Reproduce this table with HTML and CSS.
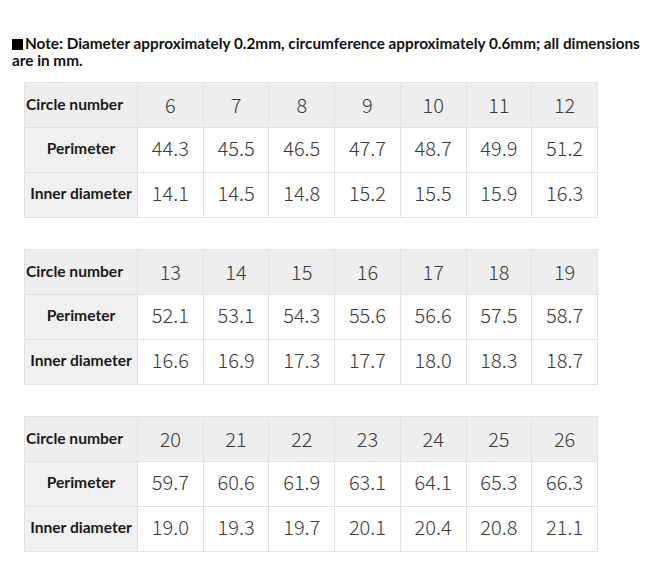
FILE: index.html
```html
<!DOCTYPE html>
<html lang="en">
<head>
<meta charset="utf-8">
<title>Ring size chart</title>
<link rel="stylesheet" href="styles.css">
</head>
<body>
<div class="page">
  <p class="note"><span class="sq"></span>Note: Diameter approximately 0.2mm, circumference approximately 0.6mm; all dimensions are in mm.</p>
  <div class="tables">
    <table class="chart">
      <colgroup><col class="c-label"><col><col><col><col><col><col><col></colgroup>
      <tr class="head"><th class="lbl left">Circle number</th><td>6</td><td>7</td><td>8</td><td>9</td><td>10</td><td>11</td><td>12</td></tr>
      <tr><th class="lbl">Perimeter</th><td>44.3</td><td>45.5</td><td>46.5</td><td>47.7</td><td>48.7</td><td>49.9</td><td>51.2</td></tr>
      <tr><th class="lbl">Inner diameter</th><td>14.1</td><td>14.5</td><td>14.8</td><td>15.2</td><td>15.5</td><td>15.9</td><td>16.3</td></tr>
    </table>
    <table class="chart">
      <colgroup><col class="c-label"><col><col><col><col><col><col><col></colgroup>
      <tr class="head"><th class="lbl left">Circle number</th><td>13</td><td>14</td><td>15</td><td>16</td><td>17</td><td>18</td><td>19</td></tr>
      <tr><th class="lbl">Perimeter</th><td>52.1</td><td>53.1</td><td>54.3</td><td>55.6</td><td>56.6</td><td>57.5</td><td>58.7</td></tr>
      <tr><th class="lbl">Inner diameter</th><td>16.6</td><td>16.9</td><td>17.3</td><td>17.7</td><td>18.0</td><td>18.3</td><td>18.7</td></tr>
    </table>
    <table class="chart">
      <colgroup><col class="c-label"><col><col><col><col><col><col><col></colgroup>
      <tr class="head"><th class="lbl left">Circle number</th><td>20</td><td>21</td><td>22</td><td>23</td><td>24</td><td>25</td><td>26</td></tr>
      <tr><th class="lbl">Perimeter</th><td>59.7</td><td>60.6</td><td>61.9</td><td>63.1</td><td>64.1</td><td>65.3</td><td>66.3</td></tr>
      <tr><th class="lbl">Inner diameter</th><td>19.0</td><td>19.3</td><td>19.7</td><td>20.1</td><td>20.4</td><td>20.8</td><td>21.1</td></tr>
    </table>
  </div>
</div>
</body>
</html>
```

FILE: styles.css
```css
html, body {
  margin: 0;
  padding: 0;
  background: #ffffff;
}
body {
  font-family: "Lato", "Noto Sans", sans-serif;
  color: #1a1a1a;
}
.page {
  padding-top: 35px;
}
.note {
  margin: 0 0 0 12px;
  width: 634px;
  font-size: 15.3px;
  font-weight: 700;
  line-height: 17px;
  color: #111;
}
.sq {
  display: inline-block;
  width: 11px;
  height: 11px;
  background: #000;
  margin-right: 2px;
  vertical-align: -1px;
}
.tables {
  margin: 13px 0 0 24px;
  display: flex;
  flex-direction: column;
  gap: 31px;
}
.chart {
  border-collapse: collapse;
  table-layout: fixed;
  width: 574px;
}
.c-label {
  width: 113px;
}
.chart th, .chart td {
  height: 39px;
  padding: 0 0 5px 0;
  border: 1px solid #e2e2e2;
  text-align: center;
  vertical-align: middle;
  line-height: 20px;
}
.chart td {
  font-family: "Noto Sans CJK SC", "Noto Sans", sans-serif;
  font-size: 20px;
  font-weight: 300;
  color: #3a3a3a;
  background: #ffffff;
}
.chart .head td {
  background: #eeeeee;
  height: 44px;
  padding: 0;
}
.lbl {
  font-size: 15.6px;
  font-weight: 700;
  color: #1a1a1a;
  background: #f0f0f0;
  white-space: nowrap;
}
.chart .head .lbl {
  background: #eeeeee;
  height: 42px;
  padding: 0 0 2px 1px;
  text-align: left;
}
```
